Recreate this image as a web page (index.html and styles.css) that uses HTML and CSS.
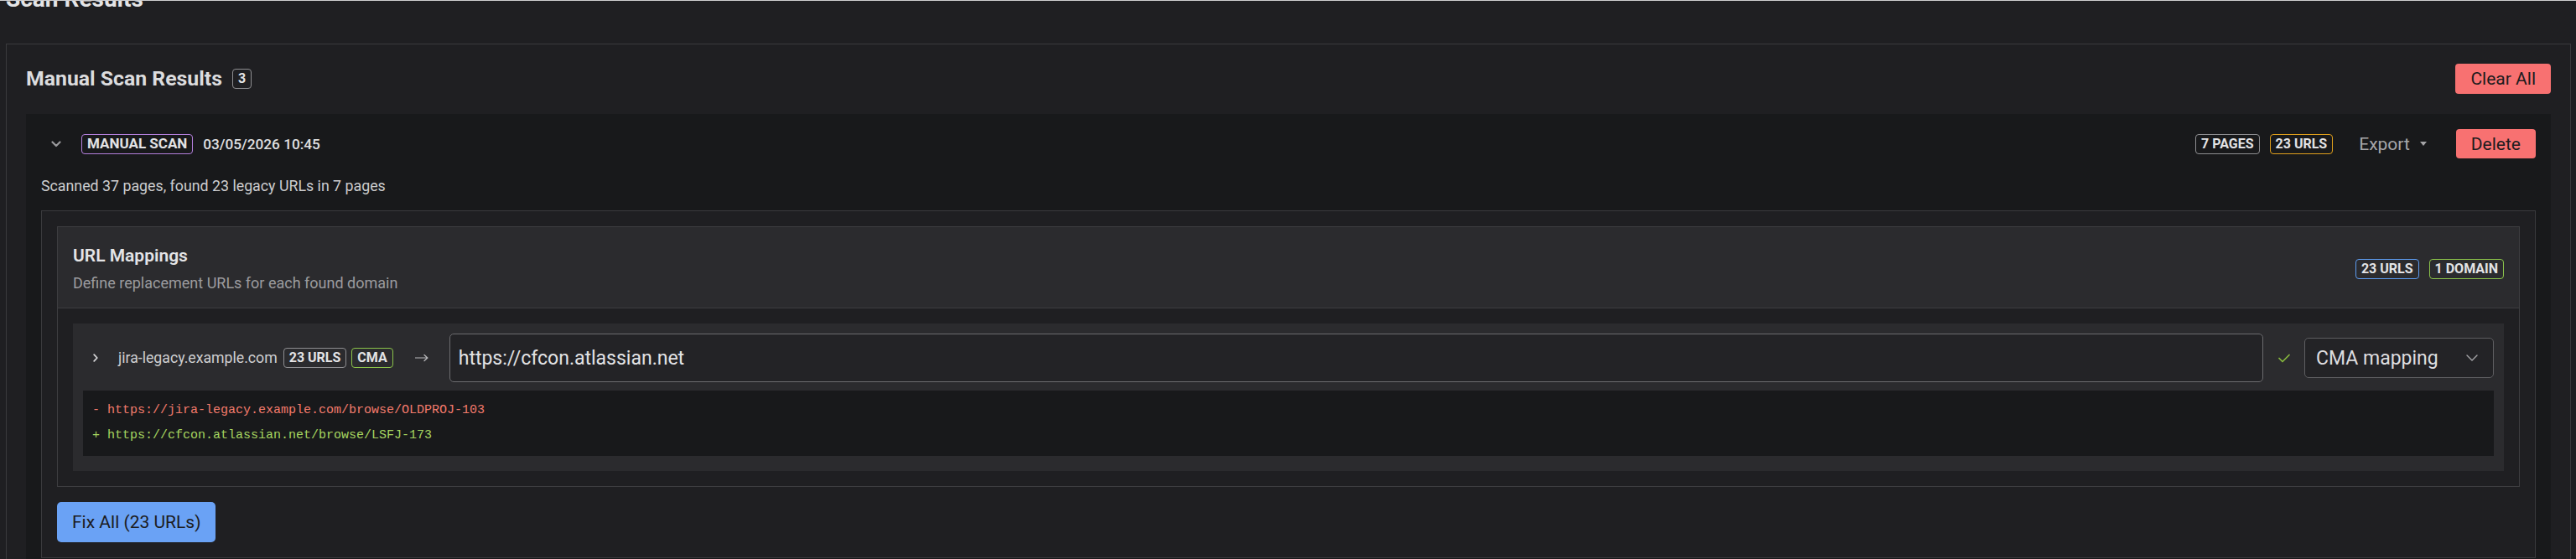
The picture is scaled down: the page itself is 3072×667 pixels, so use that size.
FILE: index.html
```html
<!DOCTYPE html>
<html lang="en">
<head>
<meta charset="utf-8">
<title>Scan Results</title>
<link rel="stylesheet" href="styles.css">
</head>
<body>
<main class="page">
  <h1 class="page-title">Scan Results</h1>
  <section class="card">
    <header class="card-head">
      <div class="card-title-wrap">
        <h2 class="card-title">Manual Scan Results</h2>
        <span class="badge badge-gray">3</span>
      </div>
      <button class="btn btn-danger btn-tall">Clear All</button>
    </header>

    <article class="scan">
      <div class="scan-head">
        <div class="scan-left">
          <button class="toggle" aria-label="Collapse">
            <svg width="12" height="8" viewBox="0 0 12 8"><path d="M1.5 1.5 6 6l4.5-4.5" fill="none" stroke="#9a9a9d" stroke-width="2.2" stroke-linecap="round" stroke-linejoin="round"/></svg>
          </button>
          <span class="badge badge-purple">Manual scan</span>
          <span class="scan-date">03/05/2026 10:45</span>
        </div>
        <div class="scan-right">
          <span class="badge badge-gray">7 pages</span>
          <span class="badge badge-orange">23 URLs</span>
          <button class="export">Export
            <svg width="8" height="5" viewBox="0 0 8 5"><path d="M0 0h8L4 5z" fill="#a4a4a7"/></svg>
          </button>
          <button class="btn btn-danger">Delete</button>
        </div>
      </div>

      <p class="scan-summary">Scanned 37 pages, found 23 legacy URLs in 7 pages</p>

      <div class="scan-body">
        <section class="mappings">
          <header class="mappings-head">
            <div class="mappings-text">
              <h3 class="mappings-title">URL Mappings</h3>
              <p class="mappings-desc">Define replacement URLs for each found domain</p>
            </div>
            <div class="badge-row">
              <span class="badge badge-blue">23 URLs</span>
              <span class="badge badge-green">1 domain</span>
            </div>
          </header>

          <div class="mappings-body">
            <div class="domain">
              <div class="domain-row">
                <button class="expand" aria-label="Expand">
                  <svg width="6" height="10" viewBox="0 0 6 10"><path d="M1.2 1.2 4.8 5 1.2 8.8" fill="none" stroke="#d2d2d4" stroke-width="1.8" stroke-linecap="round" stroke-linejoin="round"/></svg>
                </button>
                <span class="domain-name">jira-legacy.example.com</span>
                <span class="badge badge-gray badge-urls">23 URLs</span>
                <span class="badge badge-green badge-cma">CMA</span>
                <svg class="arrow" width="16" height="10" viewBox="0 0 16 10"><path d="M0.5 5h14.5M11 1.5 14.8 5 11 8.5" fill="none" stroke="#b9b9bc" stroke-width="1.2" stroke-linecap="round" stroke-linejoin="round"/></svg>
                <input class="url-input" type="text" value="https://cfcon.atlassian.net">
                <svg class="check" width="14" height="11" viewBox="0 0 14 11"><path d="M1 5.5 5 9.5 13 1.5" fill="none" stroke="#86b83e" stroke-width="1.7" stroke-linecap="round" stroke-linejoin="round"/></svg>
                <div class="select" role="button">
                  <span>CMA mapping</span>
                  <svg width="14" height="8" viewBox="0 0 14 8"><path d="M1 1l6 6 6-6" fill="none" stroke="#a6a6a9" stroke-width="1.4" stroke-linecap="round" stroke-linejoin="round"/></svg>
                </div>
              </div>
              <div class="diff">
                <div class="diff-line diff-del">- https://jira-legacy.example.com/browse/OLDPROJ-103</div>
                <div class="diff-line diff-add">+ https://cfcon.atlassian.net/browse/LSFJ-173</div>
              </div>
            </div>
          </div>
        </section>

        <button class="btn btn-primary">Fix All (23 URLs)</button>
      </div>
    </article>
  </section>
</main>
</body>
</html>
```

FILE: styles.css
```css
* {
  box-sizing: border-box;
}

html,
body {
  margin: 0;
  background: #1f1f22;
}

body {
  font-family: "Segoe UI", Roboto, "Liberation Sans", sans-serif;
  color: #e2e2e4;
  border-top: 1px solid #cfcfd1;
  overflow: hidden;
}

button,
input {
  font-family: inherit;
}

.page {
  padding: 0 6px 0 7px;
}

.page-title {
  margin: -19px 0 36px 0;
  font-size: 28px;
  line-height: 34px;
  font-weight: 700;
  color: #e4e4e6;
}

/* outer card */
.card {
  border: 1px solid #3a3a3d;
  padding: 23px;
}

.card-head {
  display: flex;
  justify-content: space-between;
  align-items: center;
  height: 36px;
}

.card-title-wrap {
  display: flex;
  align-items: center;
  gap: 12px;
}

.card-title {
  margin: 0;
  font-size: 24.8px;
  line-height: 30px;
  font-weight: 700;
  color: #dcdcde;
}

/* badges */
.badge {
  display: inline-flex;
  align-items: center;
  height: 24px;
  padding: 0 6px;
  border: 1px solid #8d8d90;
  border-radius: 4px;
  font-size: 16px;
  font-weight: 700;
  line-height: 1;
  text-transform: uppercase;
  color: #e3e3e5;
  white-space: nowrap;
}

.badge-gray { border-color: #8e8e91; }
.badge-purple { border-color: #b47fdd; font-size: 17px; }
.badge-orange { border-color: #df9f1c; }
.badge-blue { border-color: #5d9bef; }
.badge-green { border-color: #8bc34a; }

/* buttons */
.btn {
  display: inline-flex;
  align-items: center;
  justify-content: center;
  height: 35px;
  padding: 0 18px;
  border: 0;
  border-radius: 4px;
  font-size: 21px;
  color: #1c1c1e;
  cursor: pointer;
}

.btn-tall {
  height: 36px;
}

.btn-danger {
  background: #f87171;
}

.btn-primary {
  margin-top: 18px;
  height: 48px;
  border-radius: 5px;
  background: #6aa2f5;
}

/* scan item */
.scan {
  margin-top: 24px;
  background: #18191b;
  padding: 18px;
}

.scan-head {
  display: flex;
  justify-content: space-between;
  align-items: center;
  height: 35px;
}

.scan-left,
.scan-right {
  display: flex;
  align-items: center;
  gap: 12px;
}

.toggle {
  display: flex;
  align-items: center;
  justify-content: center;
  width: 36px;
  height: 30px;
  padding: 0;
  border: 0;
  background: none;
}

.scan-date {
  font-size: 17.2px;
  font-weight: 500;
  color: #e0e0e2;
}

.export {
  display: flex;
  align-items: center;
  gap: 12px;
  height: 35px;
  padding: 0 23px 0 19px;
  border: 0;
  background: none;
  font-size: 21px;
  color: #a7a7aa;
}

.scan-summary {
  margin: 21px 0 17px;
  font-size: 17.8px;
  line-height: 24px;
  color: #cdcdcf;
}

.scan-body {
  border: 1px solid #3a3a3d;
  background: #1f1f22;
  padding: 18px;
}

/* URL mappings */
.mappings {
  border: 1px solid #3d3d40;
}

.mappings-head {
  display: flex;
  justify-content: space-between;
  align-items: center;
  padding: 19px 18px 16px;
  background: #2b2b2e;
  border-bottom: 1px solid #3d3d40;
}

.mappings-title {
  margin: 0;
  font-size: 21px;
  line-height: 30px;
  font-weight: 600;
  color: #e4e4e6;
}

.mappings-desc {
  margin: 5px 0 0;
  font-size: 18px;
  line-height: 26px;
  color: #9c9c9f;
}

.badge-row {
  display: flex;
  gap: 12px;
}

.mappings-body {
  padding: 18px;
  background: #1f1f22;
}

.domain {
  background: #2b2b2e;
  padding: 12px 12px 18px;
}

.domain-row {
  display: flex;
  align-items: center;
  height: 58px;
}

.expand {
  display: flex;
  align-items: center;
  justify-content: center;
  width: 30px;
  height: 30px;
  padding: 0;
  border: 0;
  background: none;
}

.domain-name {
  margin-left: 12px;
  font-size: 17.7px;
  color: #cfcfd1;
}

.badge-urls {
  margin-left: 7px;
}

.badge-cma {
  margin-left: 6px;
}

.arrow {
  margin-left: 26px;
  flex: none;
}

.url-input {
  flex: 1;
  min-width: 0;
  margin-left: 25px;
  height: 58px;
  padding: 0 10px;
  border: 1px solid #6c6c6f;
  border-radius: 5px;
  background: #232326;
  color: #e2e2e4;
  font-size: 23px;
  outline: none;
}

.check {
  margin-left: 18px;
  flex: none;
}

.select {
  display: flex;
  align-items: center;
  justify-content: space-between;
  flex: none;
  width: 226px;
  height: 48px;
  margin-left: 17px;
  padding: 0 18px 0 13px;
  border: 1px solid #5e5e61;
  border-radius: 5px;
  background: #232326;
  font-size: 23px;
  color: #dedee0;
}

.diff {
  margin-top: 10px;
  padding: 9px 11px;
  background: #18191b;
  font-family: "Liberation Mono", monospace;
  font-size: 15px;
  line-height: 30px;
}

.diff-line {
  white-space: pre;
}

.diff-del {
  color: #f37b6c;
}

.diff-add {
  color: #a6d660;
}
```
